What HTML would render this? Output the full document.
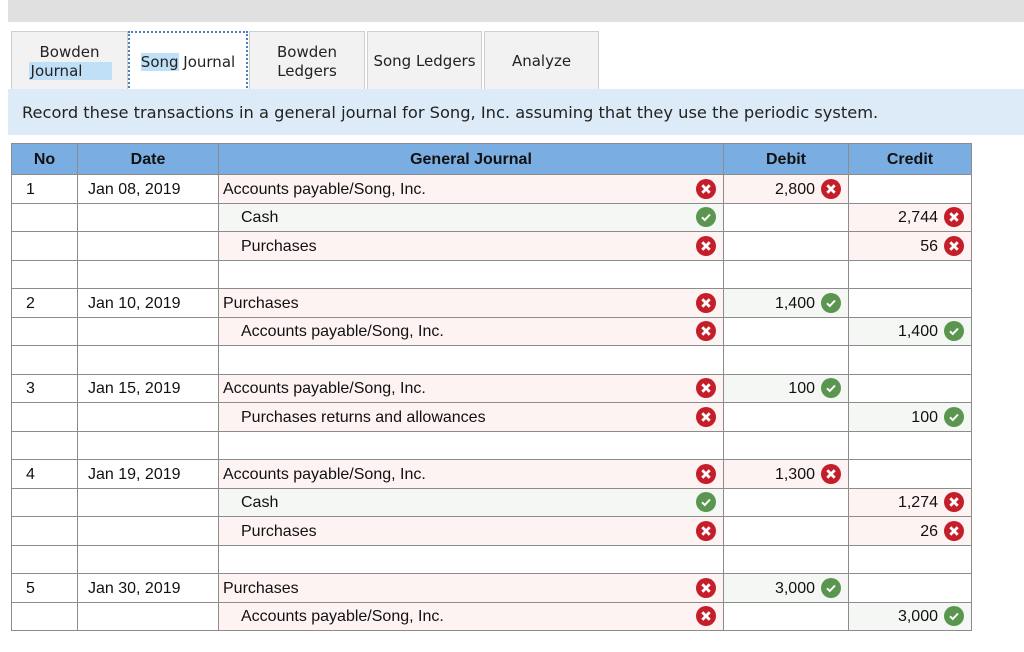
<!DOCTYPE html>
<html><head><meta charset="utf-8"><style>
body{margin:0;width:1024px;height:652px;background:#fff;position:relative;overflow:hidden;font-family:"Liberation Sans",Arial,sans-serif}
.top{position:absolute;left:8px;top:0;width:1016px;height:22px;background:#e0e0e0}
.tab{position:absolute;top:31px;height:58px;box-sizing:border-box;background:#f2f2f2;border:1px solid #cfcfcf;border-bottom:none;font-family:"DejaVu Sans",Verdana,sans-serif;font-size:15px;color:#222;display:flex;align-items:center;justify-content:center;text-align:center;line-height:19px;padding-top:2px}
.hl{background:#bfe0f7}
.bar{position:absolute;left:8px;top:89px;width:1016px;height:46px;background:#dcebf7;font-family:"DejaVu Sans",Verdana,sans-serif;font-size:16.25px;color:#222;line-height:48px;padding-left:14px;box-sizing:border-box;white-space:nowrap}
table{position:absolute;left:11px;top:143px;border-collapse:collapse;table-layout:fixed;width:960px}
td,th{border:1px solid #8c8c8c;padding:0;font-size:16px;color:#111;box-sizing:border-box;white-space:nowrap}
th{background:#7aaee2;height:31px;font-weight:bold;padding-top:2px}
td{height:28.5px;padding-top:2px}
.no{padding-left:14px}.dt{padding-left:10px}
.j{padding-left:4px;position:relative}.j.i{padding-left:22px}
.n{text-align:right;padding-right:33px;position:relative}
.r{background:#fdf3f2}.g{background:#f4f7f3}
.ic{position:absolute;right:7px;top:50%;margin-top:-10px;width:20px;height:20px;border-radius:50%}
.ic svg{display:block}
.x{background:#c41e2a}.ok{background:#5a9650}
</style></head><body>
<div class="top"></div>
<div class="tab" style="left:11px;width:117px"><div>Bowden<br><span class="hl" style="padding-right:30px;padding-left:2px;margin-left:2px">Journal</span></div></div>
<div class="tab" style="left:128px;width:120px;background:#fff;border:2px dotted #4a7fc1;height:60px"><span><span class="hl">Song</span> Journal</span></div>
<div class="tab" style="left:249px;width:116px">Bowden<br>Ledgers</div>
<div class="tab" style="left:367px;width:115px">Song Ledgers</div>
<div class="tab" style="left:484px;width:115px">Analyze</div>
<div class="bar">Record these transactions in a general journal for Song, Inc. assuming that they use the periodic system.</div>
<table>
<colgroup><col style="width:66px"><col style="width:141px"><col style="width:505px"><col style="width:125px"><col style="width:123px"></colgroup>
<tr><th>No</th><th>Date</th><th>General Journal</th><th>Debit</th><th>Credit</th></tr>
<tr><td class="no">1</td><td class="dt">Jan 08, 2019</td><td class="j r">Accounts payable/Song, Inc.<span class="ic x"><svg width="20" height="20"><path d="M6.3 6.3L13.7 13.7M13.7 6.3L6.3 13.7" stroke="#fff" stroke-width="2.8"/></svg></span></td><td class="n r">2,800<span class="ic x"><svg width="20" height="20"><path d="M6.3 6.3L13.7 13.7M13.7 6.3L6.3 13.7" stroke="#fff" stroke-width="2.8"/></svg></span></td><td></td></tr>
<tr><td></td><td></td><td class="j i g">Cash<span class="ic ok"><svg width="20" height="20"><path d="M6 10.3L8.8 13L14 7.5" stroke="#fff" stroke-width="2" fill="none"/></svg></span></td><td></td><td class="n r">2,744<span class="ic x"><svg width="20" height="20"><path d="M6.3 6.3L13.7 13.7M13.7 6.3L6.3 13.7" stroke="#fff" stroke-width="2.8"/></svg></span></td></tr>
<tr><td></td><td></td><td class="j i r">Purchases<span class="ic x"><svg width="20" height="20"><path d="M6.3 6.3L13.7 13.7M13.7 6.3L6.3 13.7" stroke="#fff" stroke-width="2.8"/></svg></span></td><td></td><td class="n r">56<span class="ic x"><svg width="20" height="20"><path d="M6.3 6.3L13.7 13.7M13.7 6.3L6.3 13.7" stroke="#fff" stroke-width="2.8"/></svg></span></td></tr>
<tr><td></td><td></td><td></td><td></td><td></td></tr>
<tr><td class="no">2</td><td class="dt">Jan 10, 2019</td><td class="j r">Purchases<span class="ic x"><svg width="20" height="20"><path d="M6.3 6.3L13.7 13.7M13.7 6.3L6.3 13.7" stroke="#fff" stroke-width="2.8"/></svg></span></td><td class="n g">1,400<span class="ic ok"><svg width="20" height="20"><path d="M6 10.3L8.8 13L14 7.5" stroke="#fff" stroke-width="2" fill="none"/></svg></span></td><td></td></tr>
<tr><td></td><td></td><td class="j i r">Accounts payable/Song, Inc.<span class="ic x"><svg width="20" height="20"><path d="M6.3 6.3L13.7 13.7M13.7 6.3L6.3 13.7" stroke="#fff" stroke-width="2.8"/></svg></span></td><td></td><td class="n g">1,400<span class="ic ok"><svg width="20" height="20"><path d="M6 10.3L8.8 13L14 7.5" stroke="#fff" stroke-width="2" fill="none"/></svg></span></td></tr>
<tr><td></td><td></td><td></td><td></td><td></td></tr>
<tr><td class="no">3</td><td class="dt">Jan 15, 2019</td><td class="j r">Accounts payable/Song, Inc.<span class="ic x"><svg width="20" height="20"><path d="M6.3 6.3L13.7 13.7M13.7 6.3L6.3 13.7" stroke="#fff" stroke-width="2.8"/></svg></span></td><td class="n g">100<span class="ic ok"><svg width="20" height="20"><path d="M6 10.3L8.8 13L14 7.5" stroke="#fff" stroke-width="2" fill="none"/></svg></span></td><td></td></tr>
<tr><td></td><td></td><td class="j i r">Purchases returns and allowances<span class="ic x"><svg width="20" height="20"><path d="M6.3 6.3L13.7 13.7M13.7 6.3L6.3 13.7" stroke="#fff" stroke-width="2.8"/></svg></span></td><td></td><td class="n g">100<span class="ic ok"><svg width="20" height="20"><path d="M6 10.3L8.8 13L14 7.5" stroke="#fff" stroke-width="2" fill="none"/></svg></span></td></tr>
<tr><td></td><td></td><td></td><td></td><td></td></tr>
<tr><td class="no">4</td><td class="dt">Jan 19, 2019</td><td class="j r">Accounts payable/Song, Inc.<span class="ic x"><svg width="20" height="20"><path d="M6.3 6.3L13.7 13.7M13.7 6.3L6.3 13.7" stroke="#fff" stroke-width="2.8"/></svg></span></td><td class="n r">1,300<span class="ic x"><svg width="20" height="20"><path d="M6.3 6.3L13.7 13.7M13.7 6.3L6.3 13.7" stroke="#fff" stroke-width="2.8"/></svg></span></td><td></td></tr>
<tr><td></td><td></td><td class="j i g">Cash<span class="ic ok"><svg width="20" height="20"><path d="M6 10.3L8.8 13L14 7.5" stroke="#fff" stroke-width="2" fill="none"/></svg></span></td><td></td><td class="n r">1,274<span class="ic x"><svg width="20" height="20"><path d="M6.3 6.3L13.7 13.7M13.7 6.3L6.3 13.7" stroke="#fff" stroke-width="2.8"/></svg></span></td></tr>
<tr><td></td><td></td><td class="j i r">Purchases<span class="ic x"><svg width="20" height="20"><path d="M6.3 6.3L13.7 13.7M13.7 6.3L6.3 13.7" stroke="#fff" stroke-width="2.8"/></svg></span></td><td></td><td class="n r">26<span class="ic x"><svg width="20" height="20"><path d="M6.3 6.3L13.7 13.7M13.7 6.3L6.3 13.7" stroke="#fff" stroke-width="2.8"/></svg></span></td></tr>
<tr><td></td><td></td><td></td><td></td><td></td></tr>
<tr><td class="no">5</td><td class="dt">Jan 30, 2019</td><td class="j r">Purchases<span class="ic x"><svg width="20" height="20"><path d="M6.3 6.3L13.7 13.7M13.7 6.3L6.3 13.7" stroke="#fff" stroke-width="2.8"/></svg></span></td><td class="n g">3,000<span class="ic ok"><svg width="20" height="20"><path d="M6 10.3L8.8 13L14 7.5" stroke="#fff" stroke-width="2" fill="none"/></svg></span></td><td></td></tr>
<tr><td></td><td></td><td class="j i r">Accounts payable/Song, Inc.<span class="ic x"><svg width="20" height="20"><path d="M6.3 6.3L13.7 13.7M13.7 6.3L6.3 13.7" stroke="#fff" stroke-width="2.8"/></svg></span></td><td></td><td class="n g">3,000<span class="ic ok"><svg width="20" height="20"><path d="M6 10.3L8.8 13L14 7.5" stroke="#fff" stroke-width="2" fill="none"/></svg></span></td></tr>
</table>
</body></html>
